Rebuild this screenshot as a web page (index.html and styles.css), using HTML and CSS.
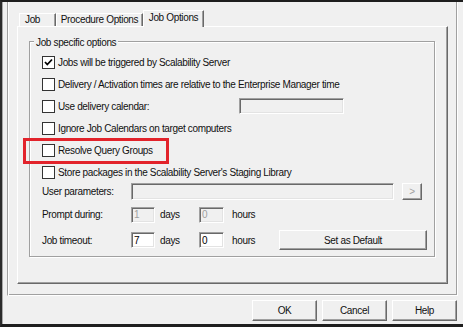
FILE: index.html
```html
<!DOCTYPE html>
<html lang="en">
  <head>
    <meta charset="UTF-8" />
    <meta name="viewport" content="width=device-width, initial-scale=1.0" />
    <title>Job Options</title>
    <link rel="stylesheet" href="styles.css">
  </head>
  <body>
    <div class="frame">
      <div class="tabs">
        <div class="tab tab-job">Job</div>
        <div class="tab tab-proc">Procedure Options</div>
        <div class="tab tab-opts active">Job Options</div>
      </div>

      <div class="panel">
        <fieldset class="group">
          <legend>Job specific options</legend>

          <div class="row">
            <span class="check">
              <svg width="11" height="11" viewBox="0 0 11 11"><polyline points="2,5 4.3,7.5 9,2.5" fill="none" stroke="#000" stroke-width="1.8" /></svg>
            </span>
            <span>Jobs will be triggered by Scalability Server</span>
          </div>
          <div class="row">
            <span class="check"></span>
            <span>Delivery / Activation times are relative to the Enterprise Manager time</span>
          </div>
          <div class="row">
            <span class="check"></span>
            <span class="cal-label">Use delivery calendar:</span>
            <input class="edit cal-input" type="text" disabled />
          </div>
          <div class="row">
            <span class="check"></span>
            <span>Ignore Job Calendars on target computers</span>
          </div>
          <div class="row">
            <span class="check"></span>
            <span>Resolve Query Groups</span>
            <span class="highlight"></span>
          </div>
          <div class="row">
            <span class="check"></span>
            <span>Store packages in the Scalability Server's Staging Library</span>
          </div>

          <div class="field-row params">
            <span class="field-label">User parameters:</span>
            <input class="edit params-input" type="text" disabled />
            <button class="btn browse" disabled>&gt;</button>
          </div>
          <div class="field-row prompt">
            <span class="field-label">Prompt during:</span>
            <input class="edit num" type="text" value="1" disabled />
            <span class="unit days">days</span>
            <input class="edit num num-hours" type="text" value="0" disabled />
            <span class="unit hours">hours</span>
          </div>
          <div class="field-row timeout">
            <span class="field-label">Job timeout:</span>
            <input class="edit num" type="text" value="7" />
            <span class="unit days">days</span>
            <input class="edit num num-hours" type="text" value="0" />
            <span class="unit hours">hours</span>
            <button class="btn default-btn">Set as Default</button>
          </div>
        </fieldset>
      </div>
    </div>

    <div class="footer">
      <button class="btn dlg-btn">OK</button>
      <button class="btn dlg-btn">Cancel</button>
      <button class="btn dlg-btn">Help</button>
    </div>
  </body>
</html>
```

FILE: styles.css
```css
* {
  box-sizing: border-box;
}
:root {
  --face: #f0f0f0;
  --shadow: #a0a0a0;
  --dark: #696969;
  --light: #fff;
}
html {
  background: var(--face);
}
body {
  margin: 0;
  width: 463px;
  height: 327px;
  overflow: hidden;
  background: var(--face);
  border-top: 2px solid #1e1e1e;
  border-left: 2px solid #2b2b2b;
  border-bottom: 3px solid #1e1e1e;
  box-shadow: inset 1px 0 #a8a8a8;
  font-family: "Liberation Sans", Arial, sans-serif;
  font-size: 10px;
  letter-spacing: -0.35px;
  color: #111;
}

/* outer etched frame */
.frame {
  margin-left: 5px;
  width: 451px;
  height: 294px;
  padding: 8px 9px 11px 9px;
  border-left: 1px solid var(--shadow);
  border-right: 1px solid var(--light);
  border-bottom: 1px solid var(--light);
  box-shadow: inset 1px 0 var(--light), inset -1px -1px var(--shadow);
  display: flex;
  flex-direction: column;
}

/* tabs */
.tabs {
  display: flex;
  align-items: flex-end;
  height: 16px;
  padding-left: 2px;
}
.tab {
  height: 13px;
  line-height: 12px;
  border: 1px solid;
  border-bottom: none;
  border-color: var(--light) var(--dark) transparent var(--light);
  box-shadow: inset -1px 0 var(--shadow);
  text-align: center;
  white-space: nowrap;
}
.tab-job {
  width: 37px;
  text-align: left;
  padding-left: 5px;
}
.tab-proc {
  width: 87px;
}
.tab-opts {
  width: 61px;
}
.tab.active {
  height: 17px;
  line-height: 14px;
  margin-bottom: -1px;
  position: relative;
  z-index: 1;
  background: var(--face);
}

/* tab page */
.panel {
  height: 258px;
  border: 1px solid;
  border-color: var(--light) var(--dark) var(--dark) var(--light);
  box-shadow: inset -1px -1px var(--shadow);
}

/* group box */
.group {
  width: 406px;
  min-width: 0;
  margin: 7px 0 0 11px;
  padding: 2px 0 6px 12px;
  border: 1px solid var(--shadow);
  box-shadow: inset 1px 1px var(--light), 1px 1px var(--light);
}
.group legend {
  margin-left: -8px;
  padding: 3px 2px 0;
  line-height: 12px;
  background: var(--face);
}

.row {
  position: relative;
  display: flex;
  align-items: center;
  gap: 3px;
  height: 22px;
  white-space: nowrap;
}
.check {
  flex: none;
  width: 13px;
  height: 13px;
  border: 1px solid #333;
  background: #fff;
}
.check svg {
  display: block;
}
.cal-label {
  width: 178px;
}
.cal-input {
  width: 105px;
}

/* red annotation round "Resolve Query Groups" */
.highlight {
  position: absolute;
  left: -19px;
  top: -1px;
  width: 146px;
  height: 26px;
  border: 3px solid #e2232b;
  pointer-events: none;
}

.field-row {
  display: flex;
  align-items: center;
  white-space: nowrap;
}
.params {
  height: 17px;
}
.prompt {
  height: 17px;
  margin-top: 6px;
}
.timeout {
  height: 20px;
  margin-top: 7px;
}
.field-label {
  width: 89px;
}
.unit.days {
  width: 44px;
  padding-left: 5px;
}
.unit.hours {
  width: 55px;
  padding-left: 8px;
}

/* sunken edit box */
.edit {
  font: inherit;
  letter-spacing: inherit;
  color: #000;
  height: 16px;
  padding: 0 2px;
  margin: 0;
  background: #fff;
  border: 1px solid;
  border-color: var(--shadow) var(--light) var(--light) var(--shadow);
  box-shadow: inset 1px 1px var(--dark), inset -1px -1px #e3e3e3;
  outline: none;
}
.edit:disabled {
  background: var(--face);
  color: var(--shadow);
}
.params-input {
  width: 263px;
  height: 17px;
}
.num {
  width: 24px;
}
.num-hours {
  width: 25px;
}

/* raised push button */
.btn {
  font: inherit;
  letter-spacing: inherit;
  color: #111;
  margin: 0;
  padding: 0;
  background: var(--face);
  border: 1px solid;
  border-color: var(--light) var(--dark) var(--dark) var(--light);
  box-shadow: inset -1px -1px var(--shadow);
}
.btn:disabled {
  color: var(--shadow);
}
.browse {
  width: 20px;
  height: 17px;
  margin-left: 8px;
}
.default-btn {
  width: 148px;
  height: 20px;
}

.footer {
  display: flex;
  justify-content: flex-end;
  gap: 5px;
  margin-top: 4px;
  padding-right: 6px;
}
.dlg-btn {
  width: 65px;
  height: 21px;
}
```
